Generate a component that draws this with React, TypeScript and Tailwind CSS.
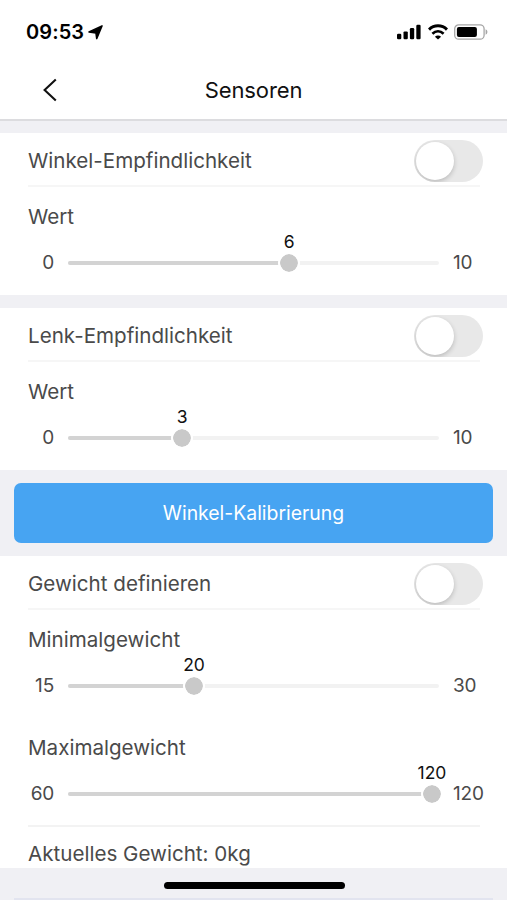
interface ToggleRowProps {
  label: string;
}

interface RangeSliderProps {
  min: number;
  max: number;
  value: number;
}

function StatusBar() {
  return (
    <div className="flex h-[60px] items-center justify-between pt-1 pr-[19px] pl-[26px]">
      <div className="flex items-center gap-1">
        <span className="text-[20px] leading-6 font-semibold tracking-[0.1px]">09:53</span>
        <svg width="15" height="15" viewBox="0 0 15 15">
          <path d="M14 .9 8.7 13.6 7.9 7.9 1 6.9z" fill="#000" stroke="#000" strokeWidth="1.5" strokeLinejoin="round" />
        </svg>
      </div>
      <div className="flex items-center">
        {/* Signal */}
        <svg width="24" height="16" viewBox="0 0 24 16">
          <rect x="0" y="9.7" width="4.3" height="5.6" rx="1.2" />
          <rect x="6.5" y="7.4" width="4.3" height="7.9" rx="1.2" />
          <rect x="12.9" y="4.1" width="4.3" height="11.2" rx="1.2" />
          <rect x="19.3" y="0.7" width="4.3" height="14.6" rx="1.2" />
        </svg>
        {/* Wifi */}
        <svg width="20" height="16" viewBox="0 0 20 16" className="ml-[6.5px]" fill="none" stroke="#000">
          <path d="M1 5.6C6.1.6 13.9.6 19 5.6" strokeWidth="3" />
          <path d="M4.4 9.7c3.3-3 7.9-3 11.2 0" strokeWidth="2.7" />
          <path d="M10 15.6 6.9 12.7c1.7-1.5 4.5-1.5 6.2 0z" fill="#000" stroke="none" />
        </svg>
        {/* Battery */}
        <svg width="34" height="16" viewBox="0 0 34 16" className="ml-[6.5px]">
          <rect x=".7" y=".8" width="29.4" height="14.4" rx="4" fill="none" stroke="#a6a6a6" strokeWidth="1.3" />
          <rect x="2.9" y="2.9" width="20" height="10.2" rx="2" />
          <path d="M31.6 5.3v5.4c1.1-.4 1.8-1.5 1.8-2.7s-.7-2.3-1.8-2.7z" fill="#a6a6a6" />
        </svg>
      </div>
    </div>
  );
}

function ToggleRow({ label }: ToggleRowProps) {
  return (
    <div className="flex h-[54px] items-center justify-between border-b-2 border-[#f6f6f6]">
      <span className="pt-1 text-[20.6px] whitespace-nowrap">{label}</span>
      <button
        type="button"
        role="switch"
        aria-checked="false"
        aria-label={label}
        className="mt-[3px] -mr-[2.5px] flex h-[42px] w-[69px] shrink-0 items-center overflow-hidden rounded-full bg-[#e8e8e8] pl-[2px]"
      >
        <span className="size-[38px] rounded-full bg-white shadow-[0px_2px_5px_rgba(0,0,0,0.2)]" />
      </button>
    </div>
  );
}

function RangeSlider({ min, max, value }: RangeSliderProps) {
  // The thumb travels from 7px to 364px along the track
  const left = 7 + ((value - min) / (max - min)) * 357;

  return (
    <div className="flex h-6 items-center text-[19px]">
      <span className="w-[26px] shrink-0 text-right tracking-[-0.2px]">{min}</span>
      <div className="relative mr-[14px] ml-[14px] h-1 w-[371px] shrink-0 rounded-full bg-[#f2f2f2]">
        <div className="h-1 rounded-full bg-[#d3d3d3]" style={{ width: left }} />
        <div
          className="absolute top-1/2 size-[22px] -translate-x-1/2 -translate-y-1/2 rounded-full border-2 border-white bg-[#c9c9c9] bg-clip-padding"
          style={{ left }}
        />
        <span
          className="absolute -top-[29px] -translate-x-1/2 text-[17.5px] leading-5 text-[#111]"
          style={{ left }}
        >
          {value}
        </span>
      </div>
      <span className="tracking-[-0.2px]">{max}</span>
    </div>
  );
}

export default function App() {
  return (
    <div className="flex h-[900px] w-[507px] flex-col overflow-hidden bg-[#f0f0f4] font-['Inter',sans-serif] text-[#4a4a4a]">
      {/* Header */}
      <header className="h-[121px] shrink-0 border-b-2 border-[#dcdcdf] bg-white text-black">
        <StatusBar />
        <div className="grid h-[60px] grid-cols-[1fr_auto_1fr] items-center">
          <button type="button" aria-label="Zurück" className="ml-[42px] w-4">
            <svg width="16" height="24" viewBox="0 0 16 24" fill="none" stroke="#111" strokeWidth="2.1">
              <path d="M13.8 1.5 2.6 12l11.2 10.5" />
            </svg>
          </button>
          <h1 className="text-[22px] tracking-[-0.1px] text-[#111]">Sensoren</h1>
        </div>
      </header>

      <main className="flex flex-col">
        <section className="mt-3 h-[162px] bg-white pr-[27px] pl-7">
          <ToggleRow label="Winkel-Empfindlichkeit" />
          <p className="mt-4 mb-5 text-[20.6px] leading-7">Wert</p>
          <RangeSlider min={0} max={10} value={6} />
        </section>

        <section className="mt-[13px] h-[162px] bg-white pr-[27px] pl-7">
          <ToggleRow label="Lenk-Empfindlichkeit" />
          <p className="mt-4 mb-5 text-[20.6px] leading-7">Wert</p>
          <RangeSlider min={0} max={10} value={3} />
        </section>

        <button
          type="button"
          className="mx-[14px] my-[13px] h-[60px] rounded-[7px] bg-[#47a4f2] pt-0.5 text-[19.4px] text-white"
        >
          Winkel-Kalibrierung
        </button>

        <section className="h-[312px] bg-white pr-[27px] pl-7">
          <ToggleRow label="Gewicht definieren" />
          <p className="mt-4 mb-5 text-[20.6px] leading-7">Minimalgewicht</p>
          <RangeSlider min={15} max={30} value={20} />
          <p className="mt-9 mb-5 text-[20.6px] leading-7">Maximalgewicht</p>
          <RangeSlider min={60} max={120} value={120} />
          <div className="mt-[19px] border-t-2 border-[#f3f3f3] pt-[13px]">
            <p className="text-[20.6px] leading-7">Aktuelles Gewicht: 0kg</p>
          </div>
        </section>
      </main>

      {/* Home indicator */}
      <footer className="flex grow flex-col items-center justify-between pt-[14px]">
        <div className="ml-px h-[7px] w-[181px] rounded-full bg-black" />
        <div className="h-[2px] w-[479px] bg-[#e2e4ef]" />
      </footer>
    </div>
  );
}
